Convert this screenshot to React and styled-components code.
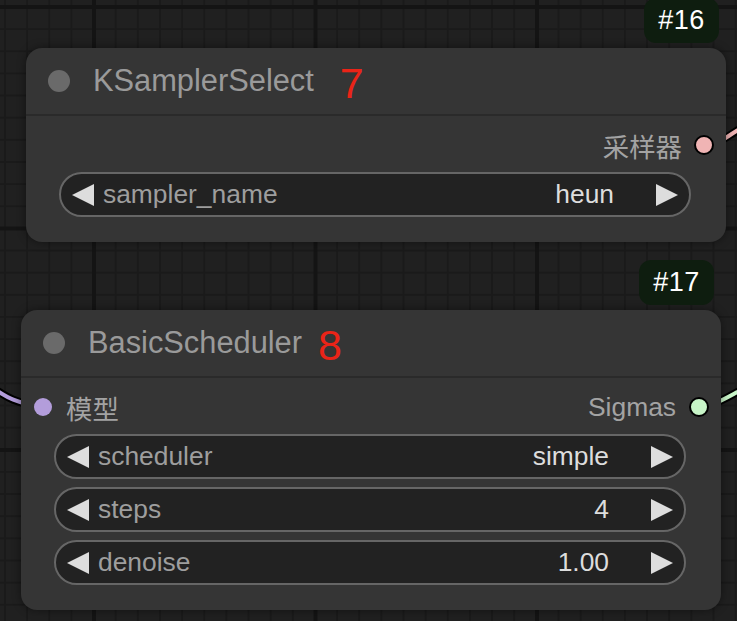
import React from 'react'
import styled, { createGlobalStyle } from 'styled-components'

const GlobalStyle = createGlobalStyle`
  html, body {
    margin: 0;
    padding: 0;
    background: #202020;
    overflow: hidden;
  }
`

// graph canvas with the litegraph grid
const Canvas = styled.div`
  position: relative;
  width: 737px;
  height: 621px;
  overflow: hidden;
  font-family: "Liberation Sans", Arial, "Noto Sans CJK SC", sans-serif;
  background-color: #202020;
  background-image:
    linear-gradient(to right, #141414 0 4px, transparent 4px),
    linear-gradient(to bottom, #141414 0 4px, transparent 4px),
    linear-gradient(to right, #1a1a1a 0 2px, transparent 2px),
    linear-gradient(to bottom, #1a1a1a 0 2px, transparent 2px);
  background-size: 221.5px 100%, 100% 221.5px, 22.15px 100%, 100% 22.15px;
  background-position: 92px 0, 0 5px, 4px 0, 0 6px;
`

const Wires = styled.svg`
  position: absolute;
  inset: 0;
  width: 737px;
  height: 621px;
`

const Node = styled.div`
  position: absolute;
  left: ${p => p.x}px;
  top: ${p => p.y}px;
  width: 700px;
  display: flex;
  flex-direction: column;
  background: #353535;
  border-radius: 16px;
  box-shadow: 0 0 10px rgba(0, 0, 0, 0.45);
`

const Badge = styled.div`
  position: absolute;
  right: 7px;
  bottom: calc(100% + 5px);
  width: 75px;
  height: 45px;
  display: flex;
  align-items: center;
  justify-content: center;
  background: #0e1d0f;
  border-radius: 12px;
  color: #fff;
  font-size: 27px;
  letter-spacing: 0.5px;
`

const Title = styled.div`
  height: 66px;
  display: flex;
  align-items: center;
  padding-left: 22px;
  border-bottom: 2px solid #2a2a2a;
`

const TitleDot = styled.span`
  width: 22px;
  height: 22px;
  border-radius: 50%;
  background: #6a6a6a;
  margin-right: 23px;
  flex: none;
`

const TitleText = styled.span`
  color: #9a9a9a;
  font-size: 30.8px;
  white-space: nowrap;
`

const Order = styled.span`
  color: #ea2418;
  font-size: 43px;
  line-height: 0;
  margin-left: ${p => p.gap}px;
  vertical-align: -7px;
`

const Body = styled.div`
  display: flex;
  flex-direction: column;
  padding: 9px 0 25px;
`

const SlotRow = styled.div`
  height: 40px;
  display: flex;
  align-items: center;
  justify-content: space-between;
  padding: 0 12px 0 13px;
  margin-bottom: 7px;
`

const SlotSide = styled.div`
  display: flex;
  align-items: center;
  gap: ${p => p.gap}px;
  font-size: 26.4px;
  color: #a3a3a3;
`

const InDot = styled.span`
  width: 18px;
  height: 18px;
  border-radius: 50%;
  background: ${p => p.color};
`

const OutDot = styled.span`
  width: 16px;
  height: 16px;
  border-radius: 50%;
  border: 2px solid #000;
  background: ${p => p.color};
`

const Widgets = styled.div`
  display: flex;
  flex-direction: column;
  gap: 8px;
  padding: 0 35px 0 33px;
`

const Widget = styled.div`
  height: 41px;
  display: flex;
  align-items: center;
  padding: 0 11px;
  background: #222;
  border: 2px solid #666;
  border-radius: 23px;
  font-size: 26.4px;
`

const Label = styled.span`
  color: #9e9e9e;
  margin-left: 9px;
  flex: 1;
`

const Value = styled.span`
  color: #dddddd;
  margin-right: 42px;
`

const Arrow = ({ dir }) => (
  <svg width="22" height="22" viewBox="0 0 22 22" style={{ flex: 'none' }}>
    <polygon points={dir === 'left' ? '0,11 22,0 22,22' : '22,11 0,0 0,22'} fill="#dddddd" />
  </svg>
)

const ComboWidget = ({ label, value }) => (
  <Widget>
    <Arrow dir="left" />
    <Label>{label}</Label>
    <Value>{value}</Value>
    <Arrow dir="right" />
  </Widget>
)

const Wire = ({ d, color }) => (
  <g fill="none" strokeLinecap="round">
    <path d={d} stroke="#000" strokeWidth="8" />
    <path d={d} stroke={color} strokeWidth="4" />
  </g>
)

export default function App() {
  return (
    <Canvas>
      <GlobalStyle />
      <Wires>
        <Wire d="M 703 146 C 718 146, 725 137, 745 126" color="#f0b4b4" />
        <Wire d="M 700 406 C 714 406, 722 400, 745 388" color="#c8f5c8" />
        <Wire d="M -10 386 C 5 396, 15 404, 43 406" color="#b39ddb" />
      </Wires>

      <Node x={26} y={48}>
        <Badge>#16</Badge>
        <Title>
          <TitleDot />
          <TitleText>
            KSamplerSelect<Order gap={26}>7</Order>
          </TitleText>
        </Title>
        <Body>
          <SlotRow>
            <span />
            <SlotSide gap={12}>
              <span>采样器</span>
              <OutDot color="#f0b4b4" />
            </SlotSide>
          </SlotRow>
          <Widgets>
            <ComboWidget label="sampler_name" value="heun" />
          </Widgets>
        </Body>
      </Node>

      <Node x={21} y={310}>
        <Badge>#17</Badge>
        <Title>
          <TitleDot />
          <TitleText>
            BasicScheduler<Order gap={16}>8</Order>
          </TitleText>
        </Title>
        <Body>
          <SlotRow>
            <SlotSide gap={14}>
              <InDot color="#b39ddb" />
              <span>模型</span>
            </SlotSide>
            <SlotSide gap={13}>
              <span>Sigmas</span>
              <OutDot color="#c8f5c8" />
            </SlotSide>
          </SlotRow>
          <Widgets>
            <ComboWidget label="scheduler" value="simple" />
            <ComboWidget label="steps" value="4" />
            <ComboWidget label="denoise" value="1.00" />
          </Widgets>
        </Body>
      </Node>
    </Canvas>
  )
}
